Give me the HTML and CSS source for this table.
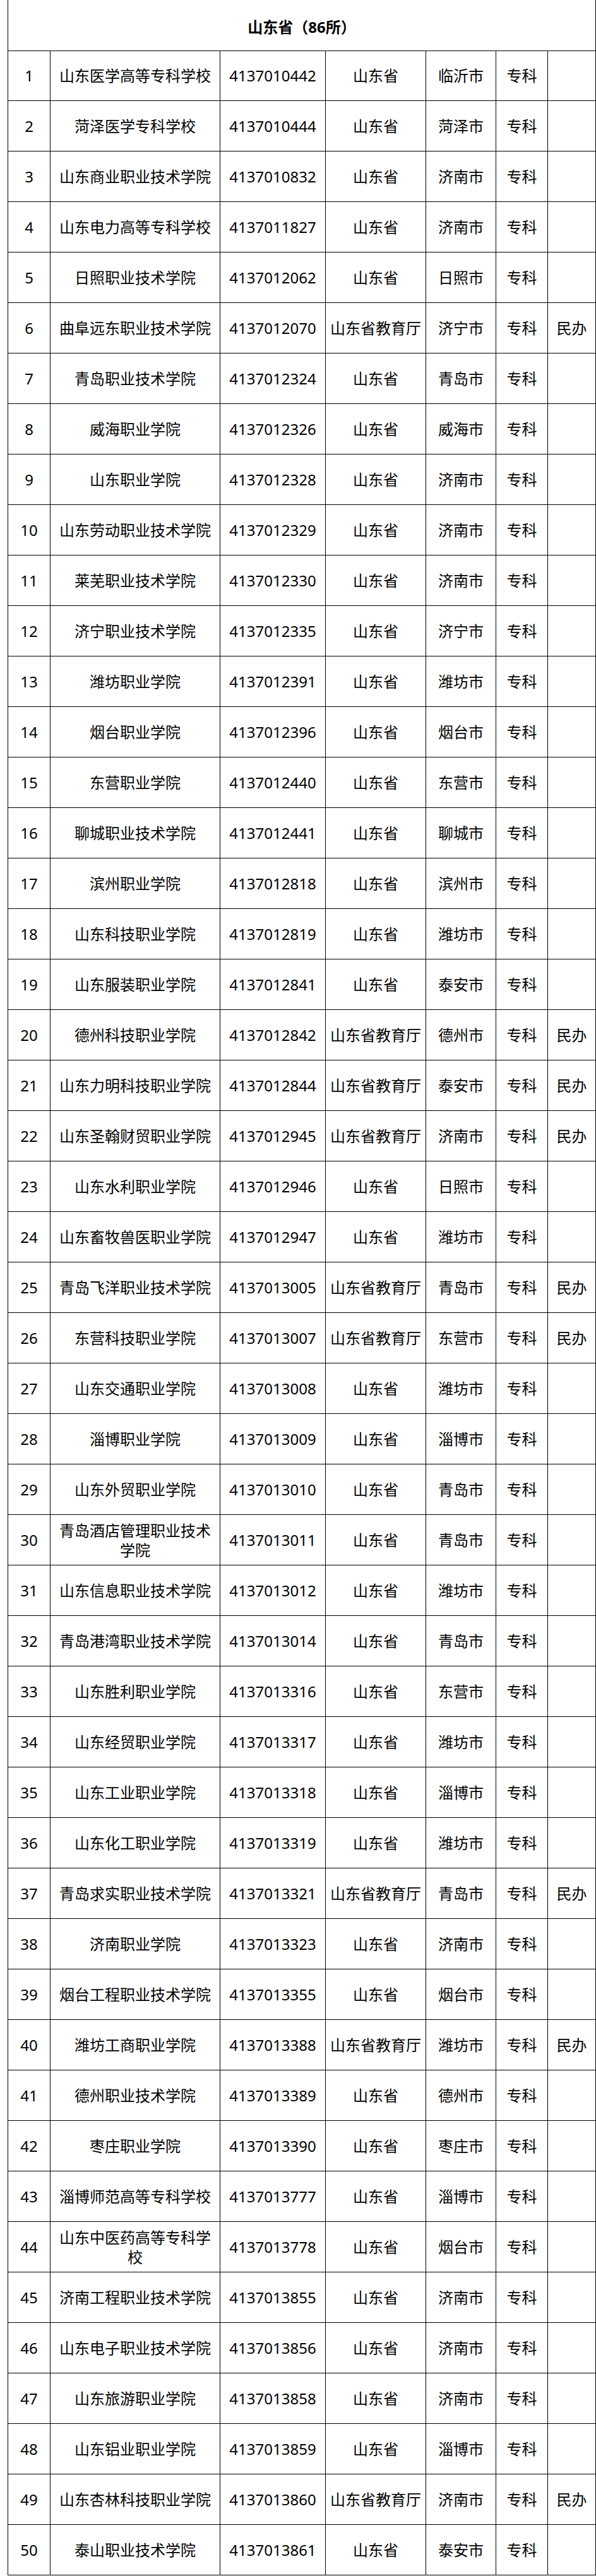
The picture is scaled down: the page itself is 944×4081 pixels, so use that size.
FILE: index.html
```html
<!DOCTYPE html>
<html lang="zh-CN">
<head>
<meta charset="utf-8">
<title>山东省（86所）</title>
<link rel="stylesheet" href="styles.css">
</head>
<body>
<div class="sheet">
<div class="title">山东省（86所）</div>
<div class="c">1</div><div class="c name">山东医学高等专科学校</div><div class="c">4137010442</div><div class="c">山东省</div><div class="c">临沂市</div><div class="c">专科</div><div class="c"></div>
<div class="c">2</div><div class="c name">菏泽医学专科学校</div><div class="c">4137010444</div><div class="c">山东省</div><div class="c">菏泽市</div><div class="c">专科</div><div class="c"></div>
<div class="c">3</div><div class="c name">山东商业职业技术学院</div><div class="c">4137010832</div><div class="c">山东省</div><div class="c">济南市</div><div class="c">专科</div><div class="c"></div>
<div class="c">4</div><div class="c name">山东电力高等专科学校</div><div class="c">4137011827</div><div class="c">山东省</div><div class="c">济南市</div><div class="c">专科</div><div class="c"></div>
<div class="c">5</div><div class="c name">日照职业技术学院</div><div class="c">4137012062</div><div class="c">山东省</div><div class="c">日照市</div><div class="c">专科</div><div class="c"></div>
<div class="c">6</div><div class="c name">曲阜远东职业技术学院</div><div class="c">4137012070</div><div class="c">山东省教育厅</div><div class="c">济宁市</div><div class="c">专科</div><div class="c">民办</div>
<div class="c">7</div><div class="c name">青岛职业技术学院</div><div class="c">4137012324</div><div class="c">山东省</div><div class="c">青岛市</div><div class="c">专科</div><div class="c"></div>
<div class="c">8</div><div class="c name">威海职业学院</div><div class="c">4137012326</div><div class="c">山东省</div><div class="c">威海市</div><div class="c">专科</div><div class="c"></div>
<div class="c">9</div><div class="c name">山东职业学院</div><div class="c">4137012328</div><div class="c">山东省</div><div class="c">济南市</div><div class="c">专科</div><div class="c"></div>
<div class="c">10</div><div class="c name">山东劳动职业技术学院</div><div class="c">4137012329</div><div class="c">山东省</div><div class="c">济南市</div><div class="c">专科</div><div class="c"></div>
<div class="c">11</div><div class="c name">莱芜职业技术学院</div><div class="c">4137012330</div><div class="c">山东省</div><div class="c">济南市</div><div class="c">专科</div><div class="c"></div>
<div class="c">12</div><div class="c name">济宁职业技术学院</div><div class="c">4137012335</div><div class="c">山东省</div><div class="c">济宁市</div><div class="c">专科</div><div class="c"></div>
<div class="c">13</div><div class="c name">潍坊职业学院</div><div class="c">4137012391</div><div class="c">山东省</div><div class="c">潍坊市</div><div class="c">专科</div><div class="c"></div>
<div class="c">14</div><div class="c name">烟台职业学院</div><div class="c">4137012396</div><div class="c">山东省</div><div class="c">烟台市</div><div class="c">专科</div><div class="c"></div>
<div class="c">15</div><div class="c name">东营职业学院</div><div class="c">4137012440</div><div class="c">山东省</div><div class="c">东营市</div><div class="c">专科</div><div class="c"></div>
<div class="c">16</div><div class="c name">聊城职业技术学院</div><div class="c">4137012441</div><div class="c">山东省</div><div class="c">聊城市</div><div class="c">专科</div><div class="c"></div>
<div class="c">17</div><div class="c name">滨州职业学院</div><div class="c">4137012818</div><div class="c">山东省</div><div class="c">滨州市</div><div class="c">专科</div><div class="c"></div>
<div class="c">18</div><div class="c name">山东科技职业学院</div><div class="c">4137012819</div><div class="c">山东省</div><div class="c">潍坊市</div><div class="c">专科</div><div class="c"></div>
<div class="c">19</div><div class="c name">山东服装职业学院</div><div class="c">4137012841</div><div class="c">山东省</div><div class="c">泰安市</div><div class="c">专科</div><div class="c"></div>
<div class="c">20</div><div class="c name">德州科技职业学院</div><div class="c">4137012842</div><div class="c">山东省教育厅</div><div class="c">德州市</div><div class="c">专科</div><div class="c">民办</div>
<div class="c">21</div><div class="c name">山东力明科技职业学院</div><div class="c">4137012844</div><div class="c">山东省教育厅</div><div class="c">泰安市</div><div class="c">专科</div><div class="c">民办</div>
<div class="c">22</div><div class="c name">山东圣翰财贸职业学院</div><div class="c">4137012945</div><div class="c">山东省教育厅</div><div class="c">济南市</div><div class="c">专科</div><div class="c">民办</div>
<div class="c">23</div><div class="c name">山东水利职业学院</div><div class="c">4137012946</div><div class="c">山东省</div><div class="c">日照市</div><div class="c">专科</div><div class="c"></div>
<div class="c">24</div><div class="c name">山东畜牧兽医职业学院</div><div class="c">4137012947</div><div class="c">山东省</div><div class="c">潍坊市</div><div class="c">专科</div><div class="c"></div>
<div class="c">25</div><div class="c name">青岛飞洋职业技术学院</div><div class="c">4137013005</div><div class="c">山东省教育厅</div><div class="c">青岛市</div><div class="c">专科</div><div class="c">民办</div>
<div class="c">26</div><div class="c name">东营科技职业学院</div><div class="c">4137013007</div><div class="c">山东省教育厅</div><div class="c">东营市</div><div class="c">专科</div><div class="c">民办</div>
<div class="c">27</div><div class="c name">山东交通职业学院</div><div class="c">4137013008</div><div class="c">山东省</div><div class="c">潍坊市</div><div class="c">专科</div><div class="c"></div>
<div class="c">28</div><div class="c name">淄博职业学院</div><div class="c">4137013009</div><div class="c">山东省</div><div class="c">淄博市</div><div class="c">专科</div><div class="c"></div>
<div class="c">29</div><div class="c name">山东外贸职业学院</div><div class="c">4137013010</div><div class="c">山东省</div><div class="c">青岛市</div><div class="c">专科</div><div class="c"></div>
<div class="c">30</div><div class="c name">青岛酒店管理职业技术学院</div><div class="c">4137013011</div><div class="c">山东省</div><div class="c">青岛市</div><div class="c">专科</div><div class="c"></div>
<div class="c">31</div><div class="c name">山东信息职业技术学院</div><div class="c">4137013012</div><div class="c">山东省</div><div class="c">潍坊市</div><div class="c">专科</div><div class="c"></div>
<div class="c">32</div><div class="c name">青岛港湾职业技术学院</div><div class="c">4137013014</div><div class="c">山东省</div><div class="c">青岛市</div><div class="c">专科</div><div class="c"></div>
<div class="c">33</div><div class="c name">山东胜利职业学院</div><div class="c">4137013316</div><div class="c">山东省</div><div class="c">东营市</div><div class="c">专科</div><div class="c"></div>
<div class="c">34</div><div class="c name">山东经贸职业学院</div><div class="c">4137013317</div><div class="c">山东省</div><div class="c">潍坊市</div><div class="c">专科</div><div class="c"></div>
<div class="c">35</div><div class="c name">山东工业职业学院</div><div class="c">4137013318</div><div class="c">山东省</div><div class="c">淄博市</div><div class="c">专科</div><div class="c"></div>
<div class="c">36</div><div class="c name">山东化工职业学院</div><div class="c">4137013319</div><div class="c">山东省</div><div class="c">潍坊市</div><div class="c">专科</div><div class="c"></div>
<div class="c">37</div><div class="c name">青岛求实职业技术学院</div><div class="c">4137013321</div><div class="c">山东省教育厅</div><div class="c">青岛市</div><div class="c">专科</div><div class="c">民办</div>
<div class="c">38</div><div class="c name">济南职业学院</div><div class="c">4137013323</div><div class="c">山东省</div><div class="c">济南市</div><div class="c">专科</div><div class="c"></div>
<div class="c">39</div><div class="c name">烟台工程职业技术学院</div><div class="c">4137013355</div><div class="c">山东省</div><div class="c">烟台市</div><div class="c">专科</div><div class="c"></div>
<div class="c">40</div><div class="c name">潍坊工商职业学院</div><div class="c">4137013388</div><div class="c">山东省教育厅</div><div class="c">潍坊市</div><div class="c">专科</div><div class="c">民办</div>
<div class="c">41</div><div class="c name">德州职业技术学院</div><div class="c">4137013389</div><div class="c">山东省</div><div class="c">德州市</div><div class="c">专科</div><div class="c"></div>
<div class="c">42</div><div class="c name">枣庄职业学院</div><div class="c">4137013390</div><div class="c">山东省</div><div class="c">枣庄市</div><div class="c">专科</div><div class="c"></div>
<div class="c">43</div><div class="c name">淄博师范高等专科学校</div><div class="c">4137013777</div><div class="c">山东省</div><div class="c">淄博市</div><div class="c">专科</div><div class="c"></div>
<div class="c">44</div><div class="c name">山东中医药高等专科学校</div><div class="c">4137013778</div><div class="c">山东省</div><div class="c">烟台市</div><div class="c">专科</div><div class="c"></div>
<div class="c">45</div><div class="c name">济南工程职业技术学院</div><div class="c">4137013855</div><div class="c">山东省</div><div class="c">济南市</div><div class="c">专科</div><div class="c"></div>
<div class="c">46</div><div class="c name">山东电子职业技术学院</div><div class="c">4137013856</div><div class="c">山东省</div><div class="c">济南市</div><div class="c">专科</div><div class="c"></div>
<div class="c">47</div><div class="c name">山东旅游职业学院</div><div class="c">4137013858</div><div class="c">山东省</div><div class="c">济南市</div><div class="c">专科</div><div class="c"></div>
<div class="c">48</div><div class="c name">山东铝业职业学院</div><div class="c">4137013859</div><div class="c">山东省</div><div class="c">淄博市</div><div class="c">专科</div><div class="c"></div>
<div class="c">49</div><div class="c name">山东杏林科技职业学院</div><div class="c">4137013860</div><div class="c">山东省教育厅</div><div class="c">济南市</div><div class="c">专科</div><div class="c">民办</div>
<div class="c">50</div><div class="c name">泰山职业技术学院</div><div class="c">4137013861</div><div class="c">山东省</div><div class="c">泰安市</div><div class="c">专科</div><div class="c"></div>
</div>
</body>
</html>
```
FILE: styles.css
```css
html, body {
  margin: 0;
  padding: 0;
  background: #ffffff;
}
body {
  padding-left: 12px;
  font-family: "Noto Sans", "Noto Sans CJK SC", sans-serif;
  color: #000000;
}
.sheet {
  display: grid;
  grid-template-columns: 67px 269px 167px 159px 111px 82px 76px;
  grid-auto-rows: 80px;
  width: 932px;
  box-sizing: border-box;
  border-left: 1px solid #000000;
}
.title {
  grid-column: 1 / -1;
  height: 81px;
  box-sizing: border-box;
  border-right: 1px solid #000000;
  border-bottom: 1px solid #000000;
  display: flex;
  align-items: center;
  justify-content: center;
  font-size: 24px;
  font-weight: 700;
  padding-top: 2px;
}
.c {
  box-sizing: border-box;
  border-right: 1px solid #000000;
  border-bottom: 1px solid #000000;
  display: flex;
  align-items: center;
  justify-content: center;
  text-align: center;
  font-size: 24px;
  line-height: 31px;
  padding: 0 5px;
  overflow: hidden;
}
.name {
  padding: 0 6px;
}
```
